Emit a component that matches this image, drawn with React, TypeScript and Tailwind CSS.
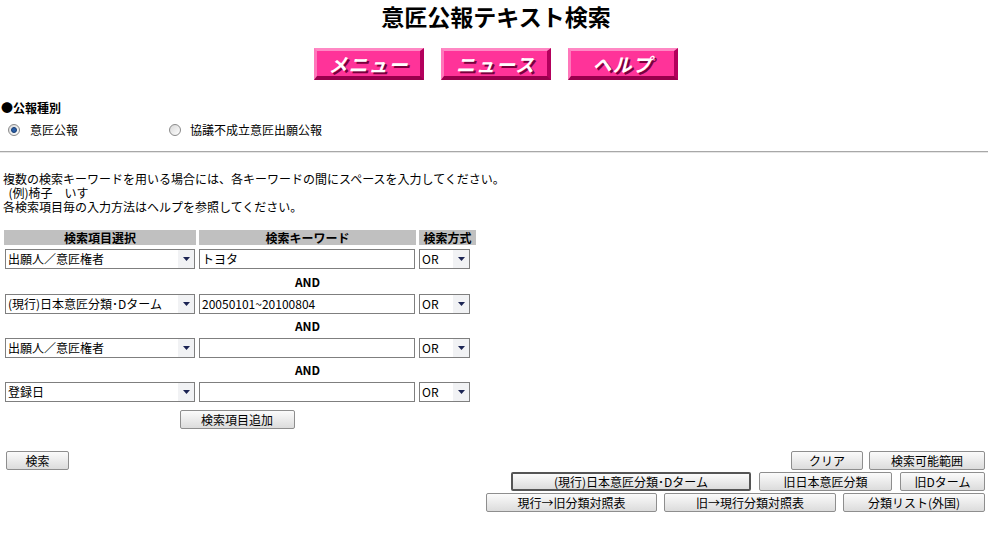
import React from "react";

const font = { fontFamily: '"Noto Sans CJK JP", "Noto Sans", sans-serif' };

function PinkButton({ label }: { label: string }) {
  return (
    <div className="w-[110px] h-[32px] bg-[#ff3399] border-t-[3px] border-l-[3px] border-b-[4px] border-r-[4px] border-t-[#ff88c4] border-l-[#ff77bb] border-b-[#99004d] border-r-[#b3005c] flex items-center justify-center">
      <span className="text-white text-[19px] font-bold italic leading-[22px] tracking-[1px] [text-shadow:2px_2px_0_#7a003d]">
        {label}
      </span>
    </div>
  );
}

function Radio({ checked }: { checked?: boolean }) {
  return (
    <span className="w-[12px] h-[12px] rounded-full border border-[#8a8a8a] bg-gradient-to-br from-[#d8d8d8] to-[#ffffff] flex items-center justify-center">
      {checked && <span className="w-[6px] h-[6px] rounded-full bg-[#2b5fa8] border border-[#183d73]" />}
    </span>
  );
}

function Select({ label, w }: { label: string; w: string }) {
  return (
    <div className={`${w} h-[20px] border border-[#7f7f7f] bg-white flex items-center`}>
      <span className="flex-1 pl-[2px] text-[12px] leading-[18px] whitespace-nowrap overflow-hidden text-black">{label}</span>
      <span className="w-[16px] h-[18px] bg-[#f1f2f4] flex items-center justify-center">
        <svg width="7" height="4" viewBox="0 0 7 4">
          <polygon points="0,0 7,0 3.5,4" fill="#1b2453" />
        </svg>
      </span>
    </div>
  );
}

function Input({ value }: { value?: string }) {
  return (
    <div className="w-[216px] h-[20px] border border-[#7f7f7f] bg-white flex items-center pl-[2px] text-[12px] leading-[18px] text-black">
      {value}
    </div>
  );
}

function Btn({ label, w, sel }: { label: string; w: string; sel?: boolean }) {
  return (
    <div
      className={`${w} h-[19px] rounded-[2px] border ${sel ? "border-[#555] border-2" : "border-[#8e8e8e]"} bg-gradient-to-b from-[#fbfbfb] to-[#dcdcdc] flex items-center justify-center text-[12px] leading-[17px] text-black whitespace-nowrap`}
    >
      {label}
    </div>
  );
}

function Row({ sel, val }: { sel: string; val?: string }) {
  return (
    <div className="flex items-center h-[20px]">
      <div className="w-[192px] pl-[1px]">
        <Select label={sel} w="w-[190px]" />
      </div>
      <div className="w-[3px]" />
      <div className="w-[217px]">
        <Input value={val} />
      </div>
      <div className="w-[3px]" />
      <div className="w-[57px]">
        <Select label="OR" w="w-[51px]" />
      </div>
    </div>
  );
}

function And({ h }: { h: string }) {
  return (
    <div className={`flex ${h} items-center`}>
      <div className="w-[195px]" />
      <div className="w-[217px] text-center text-[12px] font-bold leading-[16px]">AND</div>
    </div>
  );
}

export default function App() {
  return (
    <div className="w-[992px] h-[553px] bg-white text-black flex flex-col" style={font}>
      <div className="h-[30px] pt-[1px] flex items-center justify-center text-[23px] font-bold leading-[32px]">意匠公報テキスト検索</div>
      <div className="mt-[18px] flex justify-center gap-[17px]">
        <PinkButton label="メニュー" />
        <PinkButton label="ニュース" />
        <PinkButton label="ヘルプ" />
      </div>
      <div className="mt-[20px] h-[16px] flex items-center pl-[1px] text-[12px] font-bold leading-[16px]">●公報種別</div>
      <div className="mt-[6px] h-[16px] flex items-center text-[12px] leading-[16px]">
        <div className="w-[8px]" />
        <Radio checked />
        <span className="ml-[10px] w-[139px]">意匠公報</span>
        <Radio />
        <span className="ml-[9px]">協議不成立意匠出願公報</span>
      </div>
      <div className="mt-[13px] w-[988px] h-[2px] border-t border-[#a8a8a8] border-b-[#e6e6e6] border-b" />
      <div className="mt-[19px] pl-[3px] text-[12px] flex flex-col">
        <div className="h-[14px] leading-[14px]">複数の検索キーワードを用いる場合には、各キーワードの間にスペースを入力してください。</div>
        <div className="h-[14px] leading-[14px]">&nbsp;&nbsp;(例)椅子　いす</div>
        <div className="h-[14px] leading-[14px]">各検索項目毎の入力方法はヘルプを参照してください。</div>
      </div>
      <div className="mt-[16px] pl-[4px] flex flex-col w-[480px]">
        <div className="flex h-[15px] text-[12px] font-bold leading-[15px]">
          <div className="w-[192px] bg-[#c0c0c0] flex items-center justify-center">検索項目選択</div>
          <div className="w-[3px]" />
          <div className="w-[217px] bg-[#c0c0c0] flex items-center justify-center">検索キーワード</div>
          <div className="w-[3px]" />
          <div className="w-[57px] bg-[#c0c0c0] flex items-center justify-center">検索方式</div>
        </div>
        <div className="h-[4px]" />
        <Row sel="出願人／意匠権者" val="トヨタ" />
        <And h="h-[25px]" />
        <Row sel="(現行)日本意匠分類･Dターム" val="20050101~20100804" />
        <And h="h-[24px]" />
        <Row sel="出願人／意匠権者" />
        <And h="h-[24px]" />
        <Row sel="登録日" />
        <div className="mt-[8px] w-[466px] flex justify-center">
          <Btn label="検索項目追加" w="w-[115px]" />
        </div>
      </div>
      <div className="mt-[22px] flex justify-between pl-[6px] pr-[7px]">
        <Btn label="検索" w="w-[63px]" />
        <div className="flex gap-[6px]">
          <Btn label="クリア" w="w-[72px]" />
          <Btn label="検索可能範囲" w="w-[116px]" />
        </div>
      </div>
      <div className="mt-[2px] flex justify-end pr-[7px] gap-[8px]">
        <Btn label="(現行)日本意匠分類･Dターム" w="w-[240px]" sel />
        <Btn label="旧日本意匠分類" w="w-[133px]" />
        <Btn label="旧Dターム" w="w-[85px]" />
      </div>
      <div className="mt-[2px] flex justify-end pr-[7px] gap-[7px]">
        <Btn label="現行→旧分類対照表" w="w-[171px]" />
        <Btn label="旧→現行分類対照表" w="w-[172px]" />
        <Btn label="分類リスト(外国)" w="w-[142px]" />
      </div>
    </div>
  );
}
